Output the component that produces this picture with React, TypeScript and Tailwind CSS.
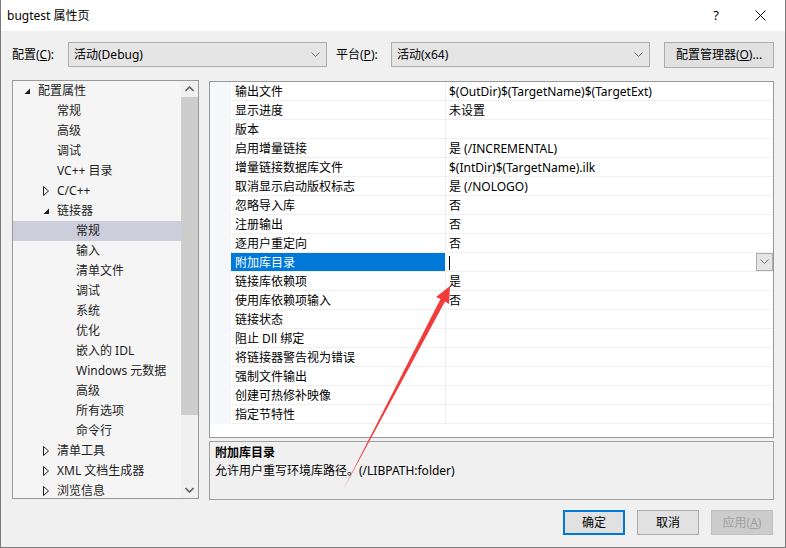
const font = { fontFamily: '"Noto Sans", "Noto Sans CJK SC", sans-serif' };

type TreeItem = { label: string; level: 0 | 1 | 2; icon?: "open" | "closed"; selected?: boolean };

const tree: TreeItem[] = [
  { label: "配置属性", level: 0, icon: "open" },
  { label: "常规", level: 1 },
  { label: "高级", level: 1 },
  { label: "调试", level: 1 },
  { label: "VC++ 目录", level: 1 },
  { label: "C/C++", level: 1, icon: "closed" },
  { label: "链接器", level: 1, icon: "open" },
  { label: "常规", level: 2, selected: true },
  { label: "输入", level: 2 },
  { label: "清单文件", level: 2 },
  { label: "调试", level: 2 },
  { label: "系统", level: 2 },
  { label: "优化", level: 2 },
  { label: "嵌入的 IDL", level: 2 },
  { label: "Windows 元数据", level: 2 },
  { label: "高级", level: 2 },
  { label: "所有选项", level: 2 },
  { label: "命令行", level: 2 },
  { label: "清单工具", level: 1, icon: "closed" },
  { label: "XML 文档生成器", level: 1, icon: "closed" },
  { label: "浏览信息", level: 1, icon: "closed" },
];

const props: [string, string][] = [
  ["输出文件", "$(OutDir)$(TargetName)$(TargetExt)"],
  ["显示进度", "未设置"],
  ["版本", ""],
  ["启用增量链接", "是 (/INCREMENTAL)"],
  ["增量链接数据库文件", "$(IntDir)$(TargetName).ilk"],
  ["取消显示启动版权标志", "是 (/NOLOGO)"],
  ["忽略导入库", "否"],
  ["注册输出", "否"],
  ["逐用户重定向", "否"],
  ["附加库目录", ""],
  ["链接库依赖项", "是"],
  ["使用库依赖项输入", "否"],
  ["链接状态", ""],
  ["阻止 Dll 绑定", ""],
  ["将链接器警告视为错误", ""],
  ["强制文件输出", ""],
  ["创建可热修补映像", ""],
  ["指定节特性", ""],
];

function Chevron({ className = "" }: { className?: string }) {
  return (
    <svg width="9" height="6" viewBox="0 0 9 6" className={className}>
      <polyline points="0.5,0.5 4.5,4.5 8.5,0.5" fill="none" stroke="#6d6d6d" strokeWidth="1" />
    </svg>
  );
}

function Expander({ kind }: { kind: "open" | "closed" }) {
  if (kind === "open")
    return (
      <svg width="7" height="7" viewBox="0 0 7 7">
        <polygon points="6,0.5 6,6 0.5,6" fill="#1e1e1e" />
      </svg>
    );
  return (
    <svg width="6" height="10" viewBox="0 0 6 10">
      <polygon points="0.5,0.5 5.5,5 0.5,9.5" fill="none" stroke="#1e1e1e" strokeWidth="1" />
    </svg>
  );
}

function TreeRow({ item }: { item: TreeItem }) {
  const indent = item.level === 0 ? "w-[9px]" : item.level === 1 ? "w-[28px]" : "w-[47px]";
  return (
    <div className={`flex h-[20px] items-center text-[12px] text-[#1e1e1e] ${item.selected ? "bg-[#cccedb]" : ""}`}>
      <div className={`shrink-0 ${indent}`} />
      <div className="flex w-[16px] shrink-0 items-center pl-[2px]">
        {item.icon && <Expander kind={item.icon} />}
      </div>
      <span className="whitespace-nowrap">{item.label}</span>
    </div>
  );
}

function Combo({ text, width }: { text: string; width: string }) {
  return (
    <div className={`flex h-[25px] items-center justify-between border border-[#adadad] bg-[#e5e5e5] pl-[5px] pr-[6px] ${width}`}>
      <span className="text-[12px]">{text}</span>
      <Chevron />
    </div>
  );
}

export default function App() {
  return (
    <div className="relative flex h-[548px] w-[786px] flex-col overflow-hidden border-x border-b border-[#7a7a7a] bg-[#f0f0f0] text-black" style={font}>
      {/* title bar */}
      <div className="flex h-[31px] shrink-0 items-center bg-white pl-[6px]">
        <span className="text-[12px]">bugtest 属性页</span>
        <span className="ml-auto mr-[36px] text-[13px]">?</span>
        <svg width="11" height="11" viewBox="0 0 11 11" className="mr-[19px]">
          <path d="M0.5 0.5 L10.5 10.5 M10.5 0.5 L0.5 10.5" stroke="#000" strokeWidth="1" />
        </svg>
      </div>

      {/* configuration row */}
      <div className="mt-[11px] flex h-[25px] items-center pl-[11px]">
        <span className="w-[56px] text-[12px]">
          配置(<u>C</u>):
        </span>
        <Combo text="活动(Debug)" width="w-[259px]" />
        <span className="ml-[9px] w-[55px] text-[12px]">
          平台(<u>P</u>):
        </span>
        <Combo text="活动(x64)" width="w-[259px]" />
        <div className="ml-[14px] flex h-[26px] w-[110px] items-center justify-center border border-[#adadad] bg-[#e1e1e1] text-[12px]">
          配置管理器(<u>O</u>)...
        </div>
      </div>

      {/* main area */}
      <div className="mt-[13px] flex pl-[11px]">
        {/* tree */}
        <div className="flex h-[419px] w-[187px] border border-[#999] bg-[#f5f5f5]">
          <div className="flex-1 overflow-hidden">
            {tree.map((t, i) => (
              <TreeRow key={i} item={t} />
            ))}
          </div>
          <div className="flex w-[17px] flex-col items-center bg-[#f0f0f0]">
            <div className="flex h-[16px] items-center justify-center">
              <svg width="9" height="6" viewBox="0 0 9 6">
                <polyline points="0.5,5 4.5,1 8.5,5" fill="none" stroke="#606060" strokeWidth="1.6" />
              </svg>
            </div>
            <div className="h-[318px] w-[17px] bg-[#cdcdcd]" />
            <div className="flex-1" />
            <div className="flex h-[16px] items-center justify-center">
              <svg width="9" height="6" viewBox="0 0 9 6">
                <polyline points="0.5,1 4.5,5 8.5,1" fill="none" stroke="#606060" strokeWidth="1.6" />
              </svg>
            </div>
          </div>
        </div>

        {/* right column */}
        <div className="ml-[10px] flex w-[565px] flex-col">
          <div className="mt-[1px] flex h-[357px] flex-col border border-[#999] bg-white">
            <div className="flex">
              <div className="w-[21px] shrink-0 bg-[#f5f7fb]" />
              <div className="flex-1">
                {props.map(([name, value], i) => {
                  const sel = name === "附加库目录";
                  return (
                    <div key={i} className="flex h-[19px] border-b border-[#f0f0f0] text-[12px]">
                      <div className={`flex w-[214px] items-center pl-[4px] pt-[1px] ${sel ? "bg-[#0078d7] text-white" : ""}`}>
                        {name}
                      </div>
                      <div className="w-px bg-[#eef0f4]" />
                      <div className="flex flex-1 items-center pl-[3px] pt-[1px]">
                        {sel ? (
                          <>
                            <div className="h-[14px] w-px bg-black" />
                            <div className="ml-auto -mt-[1px] flex h-[18px] w-[17px] items-center justify-center border border-[#adadad] bg-[#e5e5e5]">
                              <Chevron />
                            </div>
                          </>
                        ) : (
                          <span className="whitespace-nowrap">{value}</span>
                        )}
                      </div>
                    </div>
                  );
                })}
              </div>
            </div>
          </div>

          <div className="mt-[3px] h-[59px] border border-[#a0a0a0] bg-[#f0f0f0] pl-[5px] pt-[2px] text-[12px] leading-[18px]">
            <div className="font-bold">附加库目录</div>
            <div>允许用户重写环境库路径。(/LIBPATH:folder)</div>
          </div>
        </div>
      </div>

      {/* buttons */}
      <div className="mt-[10px] flex justify-end gap-[12px] pr-[12px]">
        <div className="flex h-[25px] w-[62px] items-center justify-center border-2 border-[#0078d7] bg-[#e1e1e1] text-[12px]">
          确定
        </div>
        <div className="flex h-[25px] w-[62px] items-center justify-center border border-[#adadad] bg-[#e1e1e1] text-[12px]">
          取消
        </div>
        <div className="flex h-[25px] w-[62px] items-center justify-center border border-[#bfbfbf] bg-[#cccccc] text-[12px] text-[#a0a0a0]">
          应用(<u>A</u>)
        </div>
      </div>

      {/* red annotation arrow */}
      <svg className="pointer-events-none absolute left-0 top-0" width="786" height="548" viewBox="0 0 786 548">
        <polygon
          points="449,286 448,304 444,301.5 342,490 439.5,299 435,297"
          fill="#f23b3b"
        />
      </svg>
    </div>
  );
}
